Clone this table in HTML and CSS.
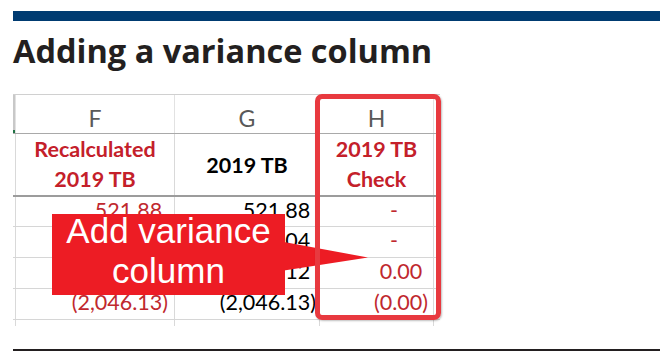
FILE: index.html
```html
<!DOCTYPE html>
<html lang="en">
<head>
<meta charset="utf-8">
<title>Adding a variance column</title>
<link rel="stylesheet" href="styles.css">
</head>
<body>
<div class="page">
  <div class="topbar"></div>
  <h1 class="title">Adding a variance column</h1>
  <div class="sheet">
    <div class="row row-letters">
      <div class="stub stub-sel"></div>
      <div class="cell col-f">F</div>
      <div class="cell col-g">G</div>
      <div class="cell col-h">H</div>
      <div class="stub"></div>
    </div>
    <div class="row row-head">
      <div class="stub"></div>
      <div class="cell col-f red">Recalculated<br>2019 TB</div>
      <div class="cell col-g single">2019 TB</div>
      <div class="cell col-h red">2019 TB<br>Check</div>
      <div class="stub"></div>
    </div>
    <div class="row row-data first">
      <div class="stub"></div>
      <div class="cell col-f num red">521.88<span class="pp">)</span></div>
      <div class="cell col-g num">521.88<span class="pp">)</span></div>
      <div class="cell col-h num red"><span class="dash">-</span></div>
      <div class="stub"></div>
    </div>
    <div class="row row-data">
      <div class="stub"></div>
      <div class="cell col-f num red">1,011.04<span class="pp">)</span></div>
      <div class="cell col-g num">1,011.04<span class="pp">)</span></div>
      <div class="cell col-h num red"><span class="dash">-</span></div>
      <div class="stub"></div>
    </div>
    <div class="row row-data">
      <div class="stub"></div>
      <div class="cell col-f num red">513.21<span class="pp">)</span></div>
      <div class="cell col-g num">513.12<span class="pp">)</span></div>
      <div class="cell col-h num red">0.00<span class="pp">)</span></div>
      <div class="stub"></div>
    </div>
    <div class="row row-data">
      <div class="stub"></div>
      <div class="cell col-f num red">(2,046.13)</div>
      <div class="cell col-g num">(2,046.13)</div>
      <div class="cell col-h num red">(0.00)</div>
      <div class="stub"></div>
    </div>
    <div class="row row-tail">
      <div class="stub"></div>
      <div class="cell col-f"></div>
      <div class="cell col-g"></div>
      <div class="cell col-h"></div>
      <div class="stub"></div>
    </div>

    <div class="callout">
      <div class="callout-text">Add variance<br>column</div>
    </div>
    <svg class="callout-arrow" width="84" height="29" viewBox="0 0 84 29" aria-hidden="true">
      <polygon points="0,0 84,15.5 0,28.5" fill="#ed1c24"/>
    </svg>
    <div class="highlight"></div>
  </div>
  <div class="rule"></div>
</div>
</body>
</html>
```

FILE: styles.css
```css
html, body {
  margin: 0;
  padding: 0;
  background: #ffffff;
}

.page {
  padding: 11px 8px 0 13px;
  font-family: "Lato", "Liberation Sans", sans-serif;
}

.topbar {
  height: 10px;
  background: #003b71;
}

.title {
  margin: 10px 0 0;
  font-family: "Open Sans", "Liberation Sans", sans-serif;
  font-weight: 700;
  font-size: 32.5px;
  line-height: 40px;
  color: #231f20;
}

.sheet {
  position: relative;
  width: 427px;
  margin-top: 23px;
}

.row {
  display: grid;
  grid-template-columns: 2px 160px 145px 114px 6px;
  box-sizing: border-box;
  border-bottom: 1px solid #d6d6d6;
}

.cell {
  box-sizing: border-box;
  border-right: 1px solid #d9d9d9;
}

.col-f {
  border-left: 1px solid #d9d9d9;
}

.row-letters {
  height: 40px;
  border-top: 1px solid #d0d0d0;
  border-bottom: 1px solid #a9a9a9;
}

.row-letters .cell {
  text-align: center;
  font-size: 23px;
  line-height: 28px;
  padding-top: 9px;
  color: #595959;
  border-right-color: #e2e2e2;
}

.row-letters .col-f {
  border-left-color: #e2e2e2;
}

.stub-sel {
  background: #c8c8c8;
  border-bottom: 3px solid #217346;
}

.row-head {
  height: 63px;
  border-bottom: 2px solid #9c9c9c;
}

.row-head .cell {
  text-align: center;
  font-weight: 700;
  font-size: 21.5px;
  line-height: 30px;
  padding-top: 0;
  color: #000000;
}

.row-head .single {
  padding-top: 16px;
}

.red {
  color: #c0222b;
}

.row-head .red {
  color: #c4202a;
}

.row-data {
  height: 31px;
}

.row-data.first {
  height: 30px;
}

.num {
  text-align: right;
  font-size: 21.5px;
  line-height: 27px;
  white-space: nowrap;
  color: #000000;
}

.num.red {
  color: #c0282e;
}

.row-data .col-f {
  padding-right: 6px;
}

.row-data .col-g {
  padding-right: 3px;
}

.row-data .col-h {
  padding-right: 5px;
}

.pp {
  visibility: hidden;
}

.dash {
  padding-right: 30px;
}

.row-tail {
  height: 6px;
  border-bottom: none;
}

.callout {
  position: absolute;
  left: 39px;
  top: 120px;
  width: 233px;
  height: 81px;
  background: #ed1c24;
  color: #ffffff;
  text-align: center;
  font-family: "Liberation Sans", Arial, sans-serif;
  font-size: 35px;
  line-height: 40px;
}

.callout-text {
  margin-top: -3px;
}

.callout-arrow {
  position: absolute;
  left: 271px;
  top: 148px;
  display: block;
}

.highlight {
  position: absolute;
  left: 302px;
  top: 0;
  width: 126px;
  height: 226px;
  box-sizing: border-box;
  border: 5px solid #e8393f;
  border-radius: 7px;
  box-shadow: 1px 1px 2px rgba(0, 0, 0, 0.25);
}

.rule {
  margin-top: 23px;
  height: 2px;
  background: #231f20;
}
```
